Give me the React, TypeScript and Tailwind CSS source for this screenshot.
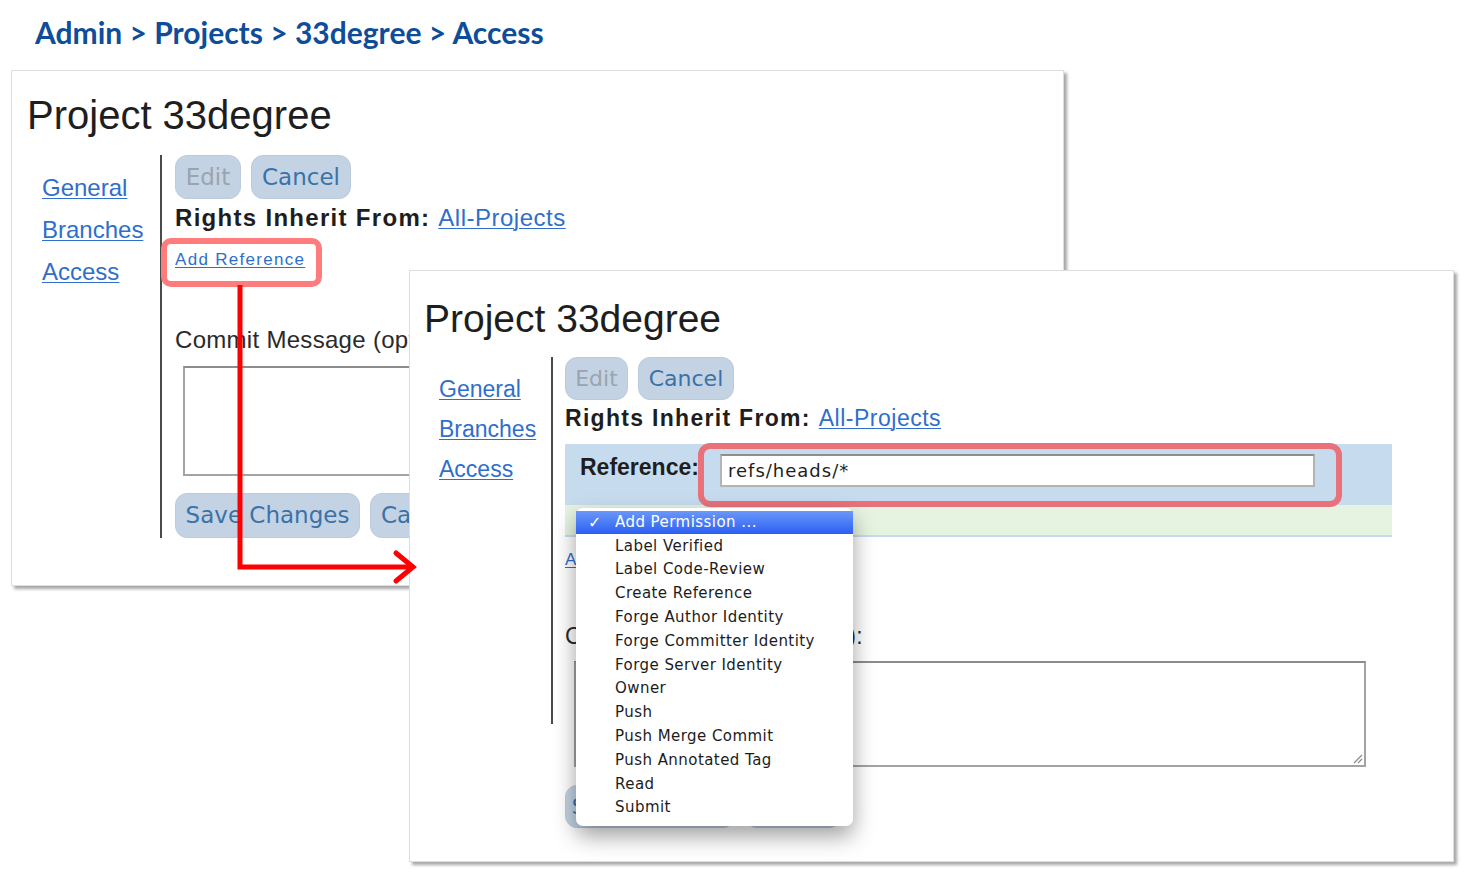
import { ReactNode } from "react";

const arial = "font-['Liberation_Sans',Arial,sans-serif]";
const lucida = "font-['DejaVu_Sans',sans-serif]";
const link = "text-[#2f6fcb] underline underline-offset-2 decoration-1";

const permissions = [
  "Label Verified",
  "Label Code-Review",
  "Create Reference",
  "Forge Author Identity",
  "Forge Committer Identity",
  "Forge Server Identity",
  "Owner",
  "Push",
  "Push Merge Commit",
  "Push Annotated Tag",
  "Read",
  "Submit",
];

function PillButton({ children, className }: { children: ReactNode; className: string }) {
  return (
    <div
      className={`flex items-center justify-center rounded-[12px] border border-[#b9cbdd] bg-[#c3d3e4] ${lucida} ${className}`}
    >
      {children}
    </div>
  );
}

function Textarea({ className }: { className: string }) {
  return (
    <div className={`relative border-2 border-[#a3a3a3] border-t-[#8c8c8c] bg-white ${className}`}>
      {/* resize grip */}
      <svg className="absolute bottom-[1px] right-[1px]" width="12" height="12" viewBox="0 0 12 12">
        <path d="M11 3 L3 11 M11 7 L7 11" stroke="#8a8a8a" strokeWidth="1.2" />
      </svg>
    </div>
  );
}

function FirstWindow() {
  return (
    <div className="absolute left-[11px] top-[70px] h-[516px] w-[1053px] overflow-hidden border border-[#dedede] bg-white shadow-[3px_3px_3px_rgba(0,0,0,0.35)]">
      <h1 className={`ml-[15px] mt-[24px] text-[40px] leading-none text-[#1e1e1e] ${arial}`}>Project 33degree</h1>
      <div className="mt-[20px] flex">
        <nav className={`flex h-[383px] w-[150px] flex-col border-r-2 border-[#4a4a4a] pl-[30px] pt-[12px] text-[24px] leading-[42px] ${arial}`}>
          <span className={link}>General</span>
          <span className={link}>Branches</span>
          <span className={link}>Access</span>
        </nav>
        <div className={`pl-[13px] ${arial}`}>
          <div className="flex h-[44px] gap-[10px]">
            <PillButton className="w-[66px] text-[23px] text-[#9ba4ae]">Edit</PillButton>
            <PillButton className="w-[100px] text-[23px] text-[#3a72a8]">Cancel</PillButton>
          </div>
          <div className="flex h-[37px] items-center whitespace-nowrap text-[24px] text-[#1e1e1e]">
            <span className="font-bold tracking-[1.3px]">Rights Inherit From:</span>
            <span className={`ml-[8px] tracking-[0.5px] ${link}`}>All-Projects</span>
          </div>
          <div className="relative flex h-[48px] items-center">
            <span className={`text-[17px] tracking-[1.3px] ${link}`}>Add Reference</span>
            <span className="absolute left-[-14px] top-[2px] h-[49px] w-[161px] rounded-[10px] border-[6px] border-[#ff7c7c]" />
          </div>
          <div className="mt-[41px] whitespace-nowrap text-[24px] leading-[30px] tracking-[0.3px] text-[#2a2a2a]">Commit Message (optional):</div>
          <Textarea className="ml-[8px] mt-[11px] h-[110px] w-[800px]" />
          <div className="mt-[17px] flex h-[45px] gap-[10px]">
            <PillButton className="w-[185px] text-[23px] text-[#3a72a8]">Save Changes</PillButton>
            <PillButton className="w-[100px] text-[23px] text-[#3a72a8]">Cancel</PillButton>
          </div>
        </div>
      </div>
    </div>
  );
}

function SecondWindow() {
  return (
    <div className="absolute left-[409px] top-[270px] h-[592px] w-[1045px] overflow-hidden border border-[#dedede] bg-white shadow-[3px_3px_3px_rgba(0,0,0,0.35)]">
      <h1 className={`ml-[14px] mt-[28px] text-[39px] leading-none text-[#1e1e1e] ${arial}`}>Project 33degree</h1>
      <div className="mt-[19px] flex">
        <nav className={`flex h-[367px] w-[143px] flex-col border-r-2 border-[#4a4a4a] pl-[29px] pt-[12px] text-[23px] leading-[40px] ${arial}`}>
          <span className={link}>General</span>
          <span className={link}>Branches</span>
          <span className={link}>Access</span>
        </nav>
        <div className={`pl-[12px] ${arial}`}>
          <div className="flex h-[43px] gap-[10px]">
            <PillButton className="w-[63px] text-[22px] text-[#9ba4ae]">Edit</PillButton>
            <PillButton className="w-[96px] text-[22px] text-[#3a72a8]">Cancel</PillButton>
          </div>
          <div className="flex h-[36px] items-center whitespace-nowrap text-[23px] text-[#1e1e1e]">
            <span className="font-bold tracking-[1.3px]">Rights Inherit From:</span>
            <span className={`ml-[8px] tracking-[0.5px] ${link}`}>All-Projects</span>
          </div>

          <div className="relative mt-[8px] w-[827px]">
            <div className="flex h-[61px] items-start bg-[#c7dbef] pl-[15px] pt-[9px]">
              <span className="w-[140px] text-[23px] font-bold leading-[28px] text-[#1e1e1e]">Reference:</span>
              <div className={`mt-[1px] flex h-[33px] w-[595px] items-center border-2 border-[#b4b4b4] border-t-[#8e8e8e] bg-white pl-[6px] text-[18px] tracking-[1px] text-[#1e1e1e] ${lucida}`}>
                refs/heads/*
              </div>
            </div>
            <div className="h-[32px] border-b-2 border-[#c7dbef] bg-[#e6f3e1]" />
            <span className="absolute left-[133px] top-[-1px] h-[64px] w-[644px] rounded-[12px] border-[6px] border-[#e8717a]" />
          </div>

          <div className={`mt-[11px] h-[24px] text-[17px] leading-[24px] tracking-[1.3px] ${link}`}>Add Permission</div>
          <div className="mt-[49px] whitespace-nowrap text-[23px] leading-[30px] tracking-[0.4px] text-[#2a2a2a]">Commit Message (optional):</div>
          <Textarea className="ml-[9px] mt-[10px] h-[106px] w-[792px]" />
          <div className="mt-[18px] flex h-[43px] gap-[10px]">
            <PillButton className="w-[170px] text-[22px] text-[#3a72a8]">Save Changes</PillButton>
            <PillButton className="w-[96px] text-[22px] text-[#3a72a8]">Cancel</PillButton>
          </div>
        </div>
      </div>
    </div>
  );
}

function PermissionMenu() {
  return (
    <div className={`absolute left-[576px] top-[508px] w-[277px] rounded-[7px] bg-white pb-[6px] pt-[3px] shadow-[0_10px_22px_rgba(0,0,0,0.38)] ${lucida}`}>
      <div className="flex h-[23px] items-center bg-gradient-to-b from-[#6b97f8] to-[#2c5ef2] text-[15px] tracking-[0.45px] text-white">
        <span className="w-[39px] pl-[12px] text-[16px]">✓</span>
        <span>Add Permission ...</span>
      </div>
      {permissions.map((p) => (
        <div key={p} className="flex h-[23.8px] items-center pl-[39px] text-[15px] tracking-[0.45px] text-[#1c1c1c]">
          {p}
        </div>
      ))}
    </div>
  );
}

export default function App() {
  return (
    <div className="relative h-[877px] w-[1466px] overflow-hidden bg-white">
      <div className="pl-[35px] pt-[10px] font-['Lato',sans-serif] text-[30px] font-bold leading-[44px] text-[#0d4d9a]">
        Admin &gt; Projects &gt; 33degree &gt; Access
      </div>
      <FirstWindow />
      <SecondWindow />
      <PermissionMenu />
      <svg className="pointer-events-none absolute left-0 top-0" width="1466" height="877">
        <polyline points="240,285 240,567 412,567" fill="none" stroke="#ff0000" strokeWidth="5" />
        <polyline points="396,553 413,567 396,581" fill="none" stroke="#ff0000" strokeWidth="5" strokeLinecap="round" />
      </svg>
    </div>
  );
}
